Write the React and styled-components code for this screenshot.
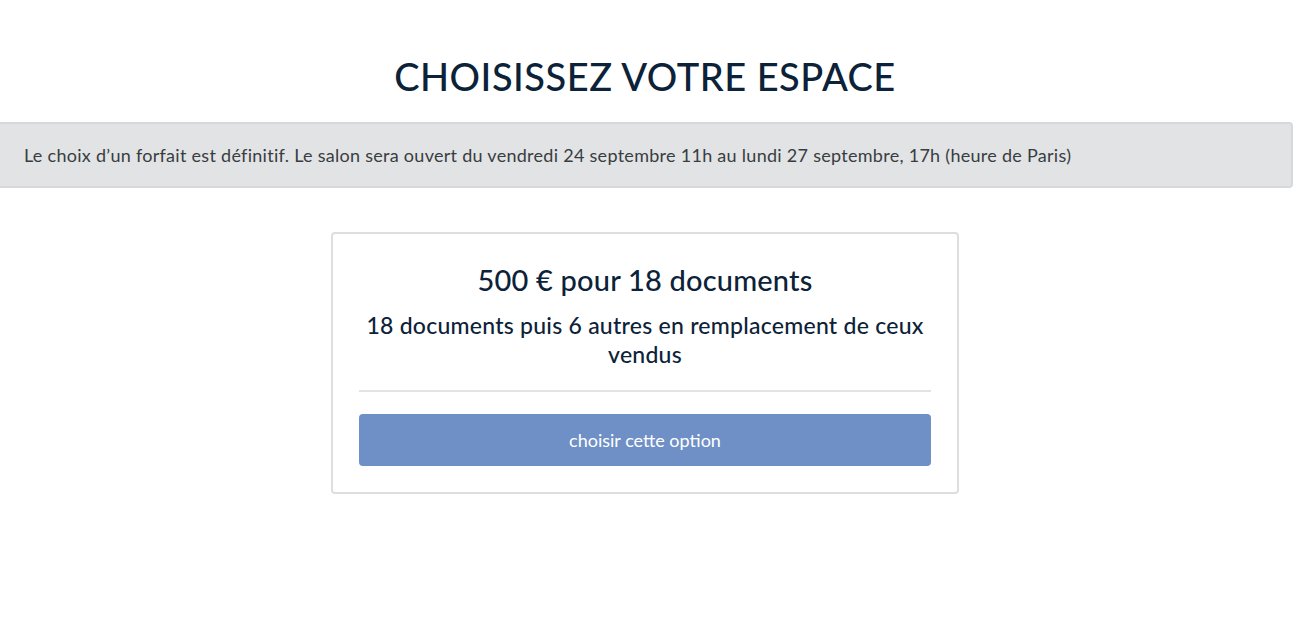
import React from "react";
import styled, { createGlobalStyle } from "styled-components";

const Global = createGlobalStyle`
  html, body { margin: 0; padding: 0; background: #fff; }
  body { font-family: Lato, "Noto Sans", sans-serif; color: #0c2238; overflow: hidden; }
`;

const Page = styled.div`
  display: flex;
  flex-direction: column;
  align-items: center;
  padding: 52px 6px 0 0;
`;

const Title = styled.h1`
  margin: 0;
  font-size: 38px;
  font-weight: 500;
  letter-spacing: 0.5px;
  line-height: 48px;
  color: #0c2238;
  text-align: center;
`;

const Alert = styled.div`
  align-self: stretch;
  margin: 22px -3px 0 -6px;
  background: #e2e3e5;
  border: 2px solid #d6d8db;
  border-radius: 4px;
  padding: 0 0 0 28px;
  height: 62px;
  display: flex;
  align-items: center;
  font-size: 18px;
  letter-spacing: 0.28px;
  color: #383d41;
`;

const Card = styled.div`
  margin-top: 44px;
  width: 628px;
  box-sizing: border-box;
  border: 2px solid #dedede;
  border-radius: 4px;
  padding: 28px 26px 26px;
  display: flex;
  flex-direction: column;
  align-items: stretch;
  text-align: center;
`;

const Price = styled.div`
  font-size: 29px;
  font-weight: 500;
  letter-spacing: 0.2px;
  line-height: 36px;
`;

const Sub = styled.div`
  margin-top: 13px;
  font-size: 23px;
  font-weight: 500;
  letter-spacing: 0.25px;
  line-height: 29px;
  padding: 0;
`;

const Divider = styled.hr`
  border: none;
  border-top: 2px solid #e3e3e3;
  margin: 21px 0 22px;
`;

const Button = styled.button`
  height: 52px;
  border: none;
  border-radius: 4px;
  background: #6f8fc7;
  color: #fff;
  font-family: inherit;
  font-size: 18px;
  cursor: pointer;
`;

export default function App() {
  return (
    <>
      <Global />
      <Page>
        <Title>CHOISISSEZ VOTRE ESPACE</Title>
        <Alert>
          Le choix d’un forfait est définitif. Le salon sera ouvert du vendredi 24 septembre 11h au lundi 27 septembre, 17h (heure de Paris)
        </Alert>
        <Card>
          <Price>500 € pour 18 documents</Price>
          <Sub>18 documents puis 6 autres en remplacement de ceux vendus</Sub>
          <Divider />
          <Button>choisir cette option</Button>
        </Card>
      </Page>
    </>
  );
}
